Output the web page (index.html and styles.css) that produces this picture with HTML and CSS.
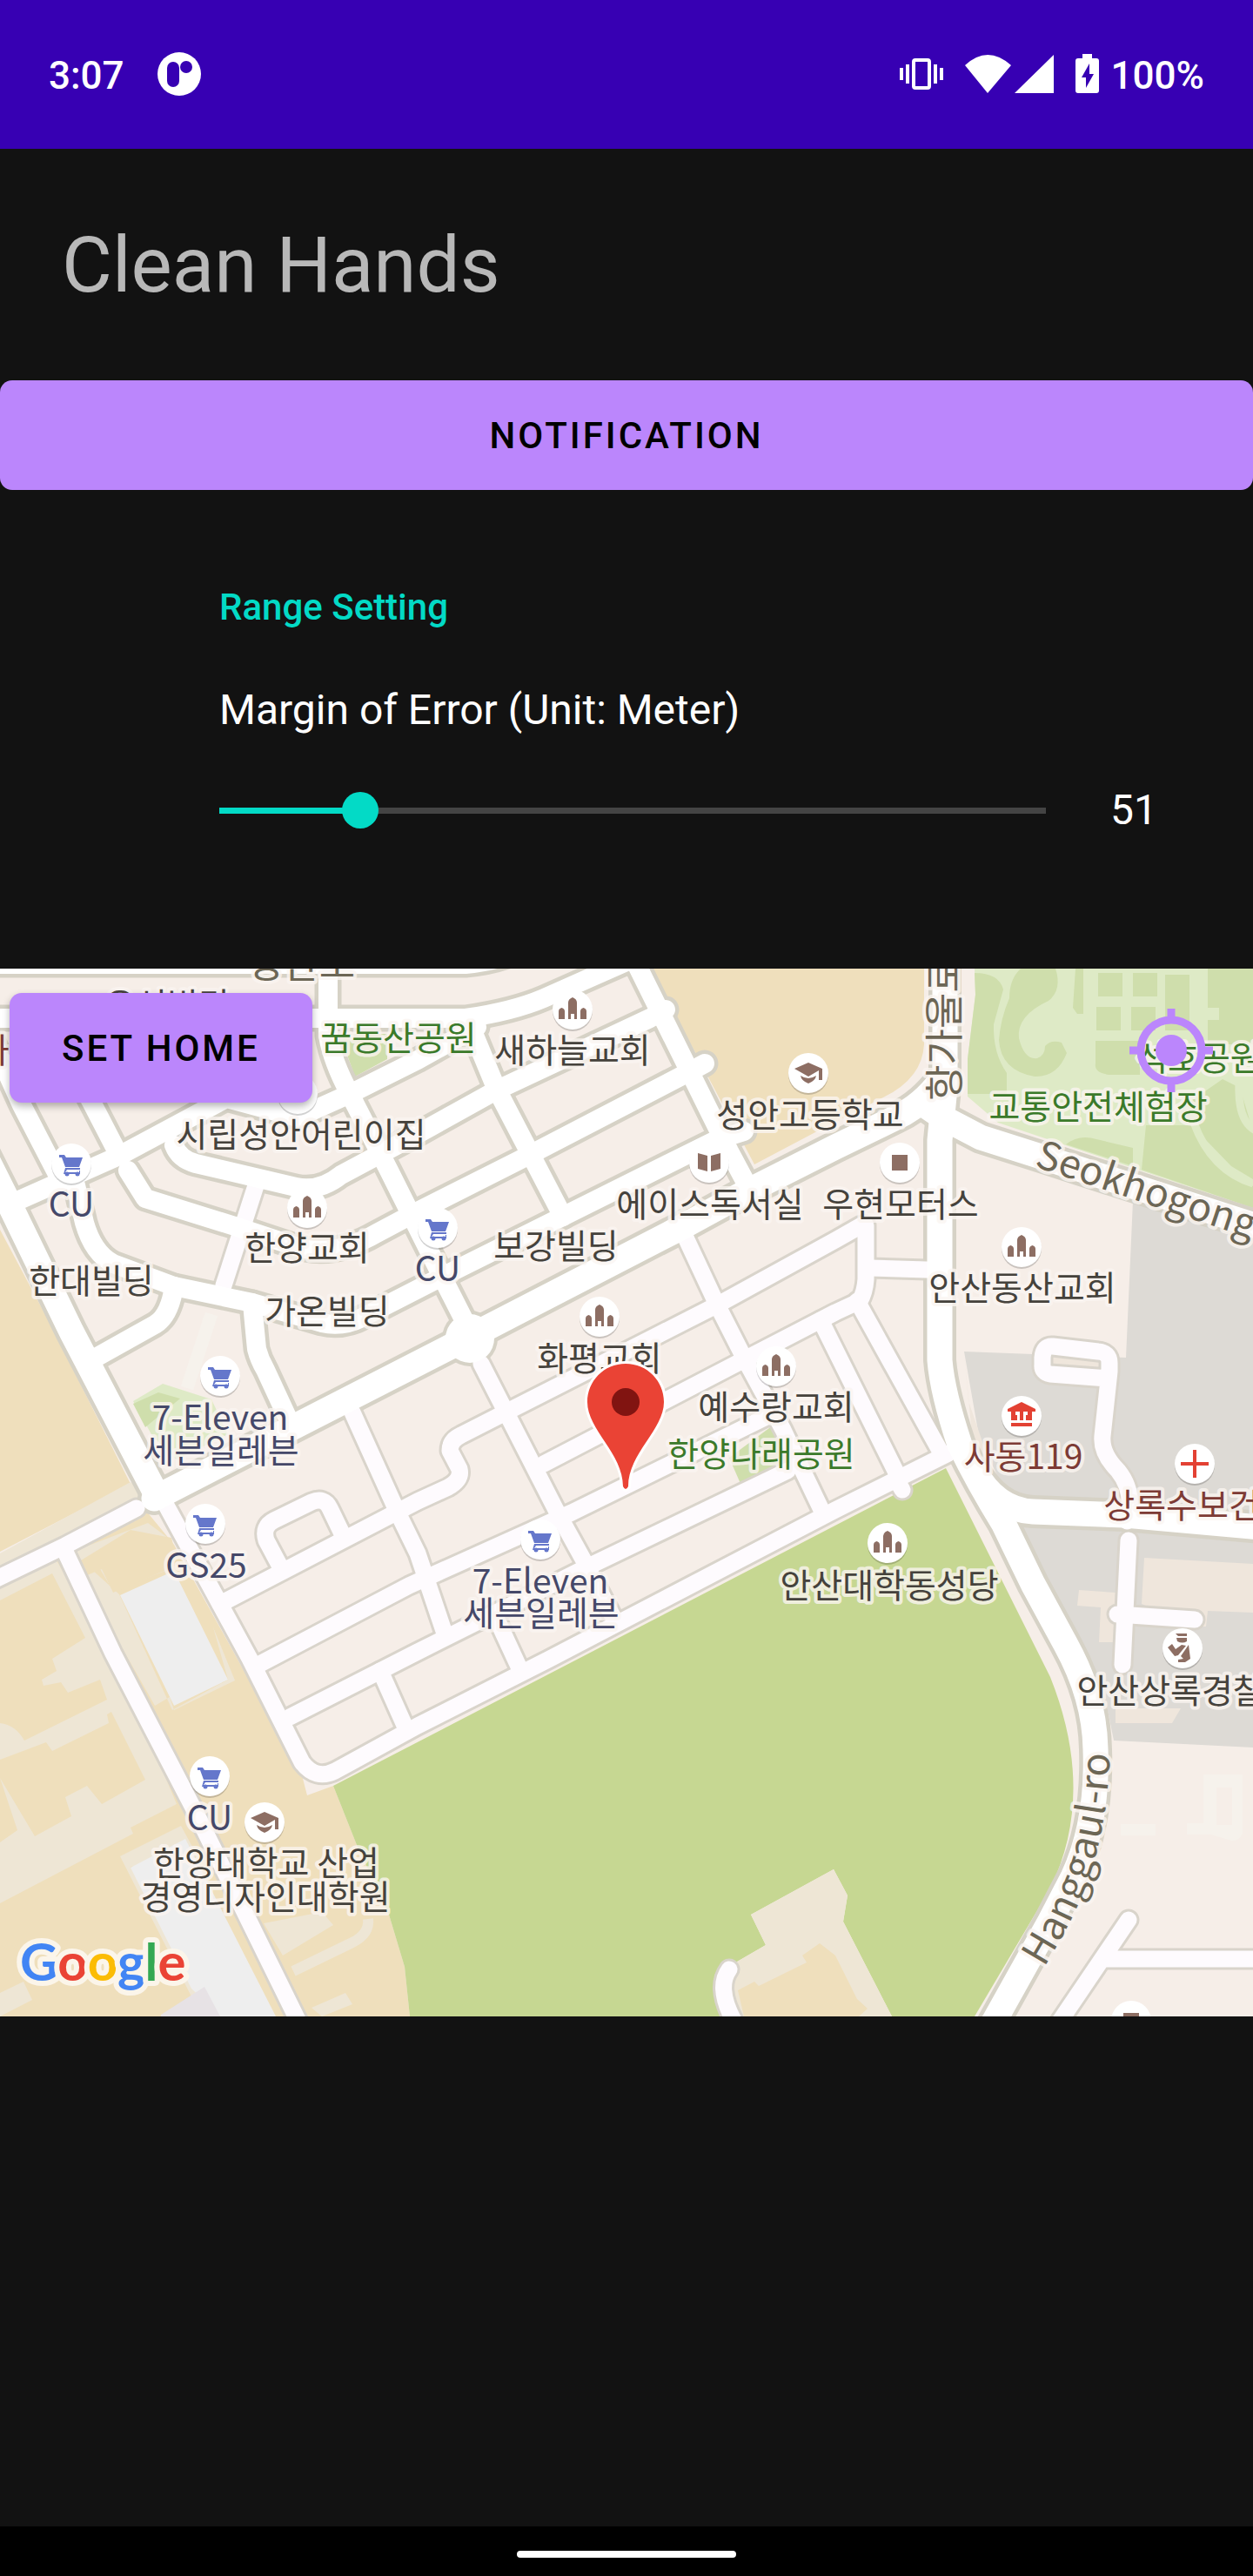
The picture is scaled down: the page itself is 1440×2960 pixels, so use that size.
FILE: index.html
```html
<!DOCTYPE html>
<html lang="en">
<head>
  <meta charset="UTF-8" />
  <title>Clean Hands</title>
  <meta name="viewport" content="width=device-width, initial-scale=1" />
  <link rel="stylesheet" href="styles.css">
</head>
<body>

  <div class="status-bar">
    <span class="status-text">3:07</span>
    <svg class="app-icon" width="50" height="50" viewBox="0 0 50 50" aria-hidden="true">
      <circle cx="25" cy="25" r="25" fill="#fff" />
      <path d="M11 18a7 7 0 0 1 14 0v15a7 7 0 0 1-14 0z" fill="#3700b3" />
      <circle cx="33" cy="17" r="7" fill="#3700b3" />
    </svg>
    <div class="status-icons">
      <svg width="50" height="46" viewBox="0 0 50 46" aria-hidden="true">
        <rect x="16" y="7" width="18" height="32" rx="2" fill="none" stroke="#fff" stroke-width="4" />
        <path d="M0 16h4v14H0zM7 12h4v22H7zM39 12h4v22h-4zM46 16h4v14h-4z" fill="#fff" />
      </svg>
      <svg class="wifi" width="102" height="46" viewBox="0 0 102 46" aria-hidden="true">
        <path d="M0 13Q26-11 53 13L26 45zM102 1v44H57z" fill="#fff" />
      </svg>
      <svg class="battery" width="27" height="46" viewBox="0 0 27 46" aria-hidden="true">
        <path d="M8 0h11v5h5q3 0 3 3v34q0 3-3 3H3q-3 0-3-3V8q0-3 3-3h5zM16 11L7 27h5v12l9-16h-5z" fill="#fff" fill-rule="evenodd" />
      </svg>
    </div>
    <span class="status-text">100%</span>
  </div>

  <header class="header">
    <h1>Clean Hands</h1>
  </header>

  <button class="btn btn-wide" type="button">NOTIFICATION</button>

  <section class="settings">
    <h2>Range Setting</h2>
    <label for="margin-error">Margin of Error (Unit: Meter)</label>
    <div class="slider-row">
      <div class="slider-track">
        <input type="range" id="margin-error" min="0" max="300" value="51" />
      </div>
      <output id="margin-value" for="margin-error">51</output>
    </div>
  </section>

  <div class="map">
    <svg class="map-canvas" viewBox="0 1113 1440 1204" role="img" aria-label="Map">
      <defs>
        <!-- Main roads -->
        <g id="avenues">
          <path d="M-20 1322L13 1388L82 1530L177 1712" />
          <path d="M177 1722L540 1536L778 1413L857 1370L960 1318L1030 1284Q1060 1270 1082 1240" />
          <path d="M1086 1100V1250L1080 1310V1563Q1083 1600 1103 1660Q1125 1705 1153 1750L1187 1820L1225 1890Q1258 1950 1259 2010Q1262 2095 1233 2157L1207 2207L1140 2327" />
          <path d="M1060 1268L1085 1285L1127 1307L1190 1327L1460 1414" />
          <path d="M1120 1690Q1145 1735 1187 1737L1293 1741L1460 1756" />
        </g>
        <!-- Side streets -->
        <g id="streets">
          <path d="M-20 1108H535Q580 1104 610 1085" />
          <path d="M-20 1170H535Q590 1162 625 1147L720 1105" />
          <path d="M377 1105V1190Q382 1220 402 1257L447 1345L508 1467L540 1530" />
          <path d="M541 1180L570 1250L608 1323L647 1398" />
          <path d="M730 1105L838 1323L862 1368" />
          <path d="M13 1383L137 1328L260 1262L342 1284L402 1257L480 1218L548 1180" />
          <path d="M-20 1170L25 1270L70 1357" />
          <path d="M60 1180L107 1270L137 1328" />
          <path d="M147 1345L167 1377L273 1410L333 1430Q380 1448 433 1417L480 1392L597 1333L780 1238L810 1222" />
          <path d="M200 1316Q206 1332 225 1337L340 1364Q367 1370 392 1350L480 1303L570 1253L747 1170L765 1160" />
          <path d="M87 1362L97 1405Q107 1440 130 1452L200 1478L290 1497L370 1520Q395 1526 420 1512L508 1467L823 1310L855 1300" />
          <path d="M290 1497Q292 1520 295 1550Q298 1562 305 1574L330 1628" />
          <path d="M200 1478Q195 1512 178 1522L110 1560" />
        </g>
        <!-- Narrow lanes -->
        <g id="lanes">
          <path d="M297 1353L257 1477" />
          <path d="M-20 1822L75 1776L157 1733" />
          <path d="M75 1783L130 1900L227 2087L345 2327" />
          <path d="M190 1728L287 1906L347 2025Q363 2046 385 2035L480 1983L630 1907L960 1735L1090 1670" />
          <path d="M1030 1700L1037 1712" />
          <path d="M253 1843L480 1725L515 1709Q531 1700 528 1688L517 1667Q517 1655 530 1649L583 1622L827 1498L960 1425L990 1408" />
          <path d="M995 1408V1470Q994 1485 988 1495L960 1508L850 1565L625 1682" />
          <path d="M1000 1457L1065 1459" />
          <path d="M985 1495L1083 1672" />
          <path d="M943 1517L1034 1700" />
          <path d="M322 1800L306 1770Q301 1754 315 1747L358 1726Q373 1720 379 1733L393 1762" />
          <path d="M553 1567L640 1737L673 1797L704 1857" />
          <path d="M405 1623L457 1738L480 1785L512 1880" />
          <path d="M437 1920L466 1985" />
          <path d="M573 1865L597 1917" />
          <path d="M787 1420L823 1497L855 1560L900 1643L945 1737" />
          <path d="M293 1915L470 1822L657 1738L893 1622" />
          <path d="M333 1973L480 1898L670 1803L905 1690" />
          <path d="M1297 1770L1290 1913M1284 1855L1373 1861" />
          <path d="M1295 1748Q1305 1715 1285 1690Q1265 1670 1267 1650L1275 1576V1566Q1275 1554 1262 1553L1210 1547Q1199 1546 1198 1560V1568Q1197 1577 1207 1579L1274 1584" />
          <path d="M1297 2206L1215 2327M1272 2251H1460" />
          <path d="M838 2263Q822 2285 846 2327" />
        </g>
        <!-- Place symbols, drawn around 0,0 -->
        <g id="disc">
          <circle cy="2" r="23" fill="#000" opacity=".18" />
          <circle r="23" fill="#fff" />
        </g>
        <g id="church">
          <use href="#disc" />
          <path fill="#8d6e63" d="M-5 11V-8q0-4 5-6q5 2 5 6V11H2V5H-2V11zM-16 11V2q0-3 3.500-4q3.500 1 3.500 4V11zM9 11V2q0-3 3.500-4q3.500 1 3.500 4V11z" />
        </g>
        <g id="cart">
          <use href="#disc" />
          <path fill="#6577cb" d="M-14-10h6l2 3H13L9 4H-7L-11-7h-3zM-7 5H10V7H-5l-2 3H9V8h1v4H-9z" />
          <circle cx="-5" cy="12" r="2.500" fill="#6577cb" />
          <circle cx="7" cy="12" r="2.500" fill="#6577cb" />
        </g>
        <g id="school">
          <use href="#disc" />
          <path fill="#8d6e63" d="M-16-5L0-12L16-5V8H12V-3L0 4zM-9 3Q0 9 9 3Q8 9 0 12Q-8 9-9 3z" />
        </g>
      </defs>

      <rect y="1113" width="1440" height="1204" fill="#f6eee8" />

      <!-- School grounds -->
      <path class="school" d="M748 1113L867 1338L937 1301L1013 1262Q1060 1240 1062 1200V1113z" />
      <path class="school" d="M0 1413L57 1520L150 1705L0 1783z" />
      <path class="school" d="M0 1795L163 1730L200 1775L347 2040L353 2063L383 2052L410 2120L447 2200L465 2260L471 2317H0z" />
      <path class="yard" d="M0 1785L150 1703L167 1718L0 1800z" />
      <path class="yard" d="M0 1825L65 1793L143 1930L203 2073L150 2100L153 2107L0 2187V2117L20 2103L0 2043L40 2110L82 2087L75 2065L100 2052L117 2073L167 2045L128 1967L123 1970L125 1980L60 2012L53 2002L0 2022V1980Q18 1982 28 2000L123 1953L115 1930L78 1945L70 1933L50 1937L48 1930L65 1920L60 1906L98 1882L60 1808L0 1839z" />
      <path class="yard" d="M83 1783L170 1750L197 1770L203 1800L130 1828L115 1803L97 1808L140 1893L178 1960L195 1950L200 1965L270 1931L245 1870L210 1810L245 1870L262 1930L198 1965L137 1832z" />
      <path class="school" d="M93 1793L150 1758L197 1767L205 1798L130 1830L117 1803L100 1810z" />
      <path class="yard" d="M0 2290L27 2277L37 2298L0 2317zM138 2133L208 2098L227 2133L150 2145L233 2300H223zM303 2210L370 2197L383 2212L325 2247zM358 2307L397 2290L405 2303L370 2317z" />
      <path d="M337 2265L405 2232Q425 2222 423 2205" fill="none" stroke="#eee6d5" stroke-width="12" />
      <path class="plaza" d="M138 1833L200 1805L262 1930L200 1960zM150 2146L213 2113L317 2317H253L220 2285z" />
      <path d="M185 2315L235 2283L253 2317H185z" fill="#e7e2e5" />

      <!-- Park at the top right -->
      <path class="park" d="M1120 1113L1121 1143L1112 1217V1260L1147 1290L1440 1388V1113z" />
      <path class="grass" d="M1120 1118Q1148 1118 1153 1137L1142 1177Q1141 1210 1157 1233V1257H1112V1217L1121 1143zM1173 1113H1213Q1221 1137 1205 1150Q1168 1167 1171 1193Q1177 1218 1192 1216Q1201 1213 1201 1202Q1208 1194 1220 1198L1226 1210Q1215 1238 1189 1237Q1150 1230 1148 1195Q1150 1170 1160 1147Q1160 1125 1173 1113zM1236 1113H1245V1165H1238L1233 1158z" />
      <path class="grass" d="M1262 1118h28v27h-28zM1302 1118h28v27h-28zM1260 1157h28v27h-28zM1300 1157h28v27h-28zM1339 1120h28v64h-28zM1388 1113H1440V1200H1388V1172H1401V1158H1388zM1259 1196H1310V1235H1275Q1257 1233 1259 1222z" />
      <path class="grass" d="M1317 1293H1372L1405 1342L1440 1363V1388L1312 1344zM1353 1276L1405 1240L1425 1250L1440 1300V1355L1415 1340zM1225 1315Q1240 1303 1260 1309L1302 1319V1340z" />
      <path d="M1372 1290Q1392 1345 1440 1360M1424 1245Q1422 1290 1445 1300" fill="none" stroke="#deeac6" stroke-width="9" />

      <!-- Pocket parks -->
      <path class="grass" d="M390 1188H445V1217L408 1237z" />
      <path class="park" d="M153 1610L187 1590L243 1608L262 1648L203 1677L175 1650z" />
      <path class="grass" d="M153 1613L182 1600L207 1607L167 1640z" />
      <path class="grass" d="M888 1638L912 1680L852 1707L838 1675z" />

      <!-- Public buildings -->
      <path class="civic" d="M1302 1380L1440 1423V2008L1280 2000L1272 1960L1250 1905L1190 1785L1155 1715L1125 1650L1108 1553L1294 1560z" />
      <path class="block" d="M1108 1553L1113 1610L1137 1680L1160 1723L1140 1715L1118 1660zM1187 1782L1258 1920L1248 1912L1182 1790zM1315 1790L1440 1797V1853L1388 1851L1386 1869H1370L1312 1843zM1240 1827L1282 1830L1280 1887H1263L1265 1847L1238 1845zM1282 1963H1357L1347 1980H1282zM1206 1557L1268 1564V1577L1206 1570z" />
      <path class="building" d="M1383 2039H1428V2107Q1424 2116 1415 2115L1392 2108H1364V2095H1383zM1398 2054V2097H1416V2054zM1288 2096H1328V2109H1288z" fill-rule="evenodd" />
      <path d="M243 1510L215 1595" fill="none" stroke="#f6f2ec" stroke-width="15" />

      <!-- Field -->
      <path d="M383 2052L1087 1687L1207 1927Q1260 2060 1207 2170L1120 2317H1025L969 2208L974 2178L958 2148L863 2200L880 2235L842 2257L843 2317H471L465 2260L447 2200L410 2120z" fill="#c6d792" />
      <path class="yard" d="M842 2257L880 2235L863 2200L958 2148L974 2178L969 2208L1025 2317H843z" />
      <path class="school" d="M848 2287L867 2277L872 2282L927 2255L922 2247L942 2233L960 2247L985 2297L997 2308L987 2317H855z" />

      <use href="#lanes" class="road lane-edge" />
      <use href="#streets" class="road street-edge" />
      <use href="#avenues" class="road avenue-edge" />
      <circle cx="540" cy="1538" r="32" fill="#d6d2c6" />
      <use href="#lanes" class="road lane" />
      <use href="#streets" class="road street" />
      <use href="#avenues" class="road avenue" />
      <circle cx="540" cy="1538" r="28" fill="#fff" />

      <!-- Places -->
      <use href="#disc" x="342" y="1257" />
      <use href="#church" x="658" y="1160" />
      <use href="#church" x="353" y="1388" />
      <use href="#church" x="689" y="1513" />
      <use href="#church" x="892" y="1570" />
      <use href="#church" x="1174" y="1433" />
      <use href="#church" x="1020" y="1773" />
      <use href="#cart" x="82" y="1337" />
      <use href="#cart" x="503" y="1411" />
      <use href="#cart" x="253" y="1581" />
      <use href="#cart" x="236" y="1751" />
      <use href="#cart" x="621" y="1769" />
      <use href="#cart" x="241" y="2041" />
      <use href="#school" x="929" y="1233" />
      <use href="#school" x="304" y="2094" />
      <g transform="translate(815 1336)">
        <use href="#disc" />
        <path fill="#8d6e63" d="M-13-11L-2-8V10L-13 7zM13-11L2-8V10L13 7z" />
      </g>
      <g transform="translate(1034 1336)">
        <use href="#disc" />
        <path fill="#8d6e63" d="M-9-9H9V9H-9z" />
      </g>
      <g transform="translate(1300 2322)">
        <use href="#disc" />
        <path fill="#8d6e63" d="M-9-9H9V9H-9z" />
      </g>
      <g transform="translate(1174 1627)">
        <use href="#disc" />
        <path fill="#e34133" fill-rule="evenodd" d="M-16-8L0-16L16-8V-5H12V5H-12V-5H-16zM-7-5V-1H-5V5H-2V-5zM7-5V-1H5V5H2V-5zM-12 8H12V12H-12z" />
      </g>
      <g transform="translate(1373 1682)">
        <use href="#disc" />
        <path fill="#e34133" d="M-16-2H-2V-16H2V-2H16V2H2V16H-2V2H-16z" />
      </g>
      <g transform="translate(1359 1894)">
        <use href="#disc" />
        <path fill="#8d6e63" d="M-8-17H5V-14H-5zM-7-12H5V-8Q0-5-6-8zM-17-1L-12-5L-8 1L-1-4L4-3L-5 8L-9 9zM7-4L9 12L3 16H-5V13L1 12L-2 9z" />
      </g>

      <!-- Place names -->
      <g class="label">
        <text x="192" y="1169">우성빌딩</text>
        <text x="658" y="1221">새하늘교회</text>
        <text x="931" y="1295">성안고등학교</text>
        <text x="346" y="1318">시립성안어린이집</text>
        <text x="353" y="1448">한양교회</text>
        <text x="105" y="1486">한대빌딩</text>
        <text x="376" y="1521">가온빌딩</text>
        <text x="816" y="1398">에이스독서실</text>
        <text x="639" y="1446">보강빌딩</text>
        <text x="1035" y="1398">우현모터스</text>
        <text x="1175" y="1494">안산동산교회</text>
        <text x="689" y="1575">화평교회</text>
        <text x="892" y="1631">예수랑교회</text>
        <text x="1022" y="1836">안산대학동성당</text>
        <text x="1363" y="1957">안산상록경찰서</text>
        <text x="306" y="2155">한양대학교 산업</text>
        <text x="305" y="2194">경영디자인대학원</text>
      </g>
      <g class="label label-park">
        <text x="458" y="1207">꿈동산공원</text>
        <text x="1262" y="1286">교통안전체험장</text>
        <text x="1378" y="1230">석호공원</text>
        <text x="875" y="1685">한양나래공원</text>
      </g>
      <g class="label label-shop">
        <text x="82" y="1398">CU</text>
        <text x="503" y="1472">CU</text>
        <text x="253" y="1643">7-Eleven</text>
        <text x="254" y="1681">세븐일레븐</text>
        <text x="237" y="1813">GS25</text>
        <text x="621" y="1831">7-Eleven</text>
        <text x="622" y="1868">세븐일레븐</text>
        <text x="241" y="2103">CU</text>
      </g>
      <g class="label label-civic">
        <text x="-7" y="1221">과</text>
        <text x="1176" y="1688">사동119</text>
        <text x="1376" y="1744">상록수보건소</text>
      </g>
      <g class="label label-road">
        <text x="346" y="1124">성안로</text>
        <text transform="translate(1102 1182) rotate(-90)">항가울로</text>
        <path id="hanggaul" d="M1200 2261C1240 2195 1274 2130 1276 2000V1960" fill="none" stroke="none" />
        <path id="seokho" d="M1188 1340L1500 1444" fill="none" stroke="none" />
        <text class="on-path"><textPath href="#hanggaul">Hanggaul-ro</textPath></text>
        <text class="on-path"><textPath href="#seokho">Seokhogong</textPath></text>
      </g>

      <!-- Home marker -->
      <path d="M719 1567C694 1567 675 1587 675 1611C675 1643 716 1670 716 1708Q719 1714 722 1708C722 1670 763 1643 763 1611C763 1587 744 1567 719 1567z" fill="#ea4335" stroke="#fff" stroke-width="6" paint-order="stroke" />
      <circle cx="719" cy="1611" r="16" fill="#811411" />

      <text class="google" x="23" y="2276"><tspan fill="#4285f4">G</tspan><tspan fill="#ea4335">o</tspan><tspan fill="#fbbc05">o</tspan><tspan fill="#4285f4">g</tspan><tspan fill="#34a853">l</tspan><tspan fill="#ea4335">e</tspan></text>
    </svg>

    <button class="btn set-home" type="button">SET HOME</button>
    <button class="locate" type="button" aria-label="My location">
      <svg viewBox="0 0 96 96" aria-hidden="true">
        <circle cx="48" cy="48" r="35" fill="none" stroke="#bb86fc" stroke-width="9" />
        <circle cx="48" cy="48" r="18" fill="#bb86fc" />
        <path d="M48 0v12M48 84v12M0 48h12M84 48h12" stroke="#bb86fc" stroke-width="9" />
      </svg>
    </button>
  </div>

  <div class="nav-bar"><span class="nav-pill"></span></div>

  <script>
    const slider = document.getElementById("margin-error");
    const output = document.getElementById("margin-value");

    slider.addEventListener("input", () => {
      output.textContent = slider.value;
      slider.style.setProperty("--fill", (slider.value / slider.max) * 100 + "%");
    });
  </script>

</body>
</html>
```

FILE: styles.css
```css
* {
  box-sizing: border-box;
}
body {
  margin: 0;
  min-height: 100vh;
  display: flex;
  flex-direction: column;
  background: #121212;
  color: #fff;
  font-family: Roboto, sans-serif;
}
.status-bar {
  display: flex;
  align-items: center;
  padding: 58px 56px 59px;
  background: #3700b3;
  font-size: 44px;
  font-weight: 500;
  line-height: 50px;
}
.status-text {
  padding-top: 4px;
}
.app-icon {
  margin-left: 38px;
}
.status-icons {
  display: flex;
  align-items: center;
  margin-left: auto;
  margin-right: 14px;
}
.wifi {
  margin-left: 25px;
}
.battery {
  margin-left: 25px;
}
.header {
  padding: 81px 71px 79px;
}
h1 {
  margin: 0;
  color: #b8b8b8;
  font-size: 89px;
  font-weight: 400;
  line-height: 106px;
}
.btn {
  padding: 39px 60px 37px;
  border: none;
  border-radius: 14px;
  background: #bb86fc;
  color: #000;
  font-family: inherit;
  font-size: 42px;
  font-weight: 500;
  line-height: 50px;
  letter-spacing: 3px;
  cursor: pointer;
}
.btn-wide {
  width: 100%;
}
.settings {
  padding: 110px 0 154px 252px;
}
h2 {
  margin: 0 0 65px;
  color: #03dac6;
  font-size: 42px;
  font-weight: 500;
  line-height: 50px;
}
label {
  display: block;
  margin-bottom: 59px;
  font-size: 48px;
  line-height: 56px;
}
.slider-row {
  display: flex;
  align-items: center;
  font-size: 48px;
  line-height: 56px;
}
/* the thumb overhangs the track by half its width at both ends */
.slider-track {
  flex: 1;
  display: flex;
  margin: 0 -21px;
}
input[type="range"] {
  --fill: 17%;
  -webkit-appearance: none;
  appearance: none;
  width: 100%;
  height: 42px;
  margin: 0;
  background: linear-gradient(to right, #03dac6 var(--fill), #444 var(--fill)) center / calc(100% - 42px) 7px no-repeat;
}
input[type="range"]::-webkit-slider-thumb {
  -webkit-appearance: none;
  width: 42px;
  height: 42px;
  border-radius: 50%;
  background: #03dac6;
}
output {
  width: 238px;
  padding-left: 74px;
}

/* Map */
.map {
  position: relative;
}
.map-canvas {
  display: block;
  width: 100%;
  height: auto;
}
.school {
  fill: #efdfbc;
}
.yard {
  fill: #eee6d5;
}
.plaza {
  fill: #eee;
}
.park {
  fill: #deeac6;
}
.grass {
  fill: #cfdeac;
}
.civic {
  fill: #dddad5;
}
.block {
  fill: #efe6dc;
}
.building {
  fill: #f6f2ec;
}
.road {
  fill: none;
  stroke-linejoin: round;
  stroke-linecap: round;
}
.lane-edge {
  stroke: #d9d4cb;
  stroke-width: 25px;
}
.lane {
  stroke: #fefbfe;
  stroke-width: 19px;
}
.street-edge {
  stroke: #d6d2c6;
  stroke-width: 31px;
}
.street {
  stroke: #fff;
  stroke-width: 22px;
}
.avenue-edge {
  stroke: #d6d2c6;
  stroke-width: 38px;
}
.avenue {
  stroke: #fff;
  stroke-width: 29px;
}
.label {
  fill: #45423c;
  stroke: #fbf5f1;
  stroke-opacity: 0.8;
  stroke-width: 8px;
  stroke-linejoin: round;
  paint-order: stroke;
  font-family: "Noto Sans CJK KR", sans-serif;
  font-size: 39px;
  text-anchor: middle;
}
.label-park {
  fill: #3b7a2a;
}
.label-shop {
  fill: #454869;
}
.label-civic {
  fill: #7d3b35;
}
.label-road {
  fill: #6c6655;
  font-size: 45px;
}
.on-path {
  text-anchor: start;
}
.google {
  font-family: Lato, sans-serif;
  font-size: 60px;
  font-weight: 700;
  stroke: #fbf5ea;
  stroke-width: 12px;
  stroke-linejoin: round;
  paint-order: stroke;
}
.set-home {
  position: absolute;
  top: 28px;
  left: 11px;
  box-shadow: 0 4px 8px rgba(0, 0, 0, 0.3);
}
.locate {
  position: absolute;
  top: 46px;
  right: 46px;
  width: 96px;
  height: 96px;
  padding: 0;
  border: none;
  background: none;
  cursor: pointer;
}
.locate svg {
  display: block;
}

.nav-bar {
  display: flex;
  justify-content: center;
  margin-top: auto;
  padding: 28px 0 21px;
  background: #000;
}
.nav-pill {
  width: 252px;
  height: 8px;
  border-radius: 4px;
  background: #fff;
}
```
